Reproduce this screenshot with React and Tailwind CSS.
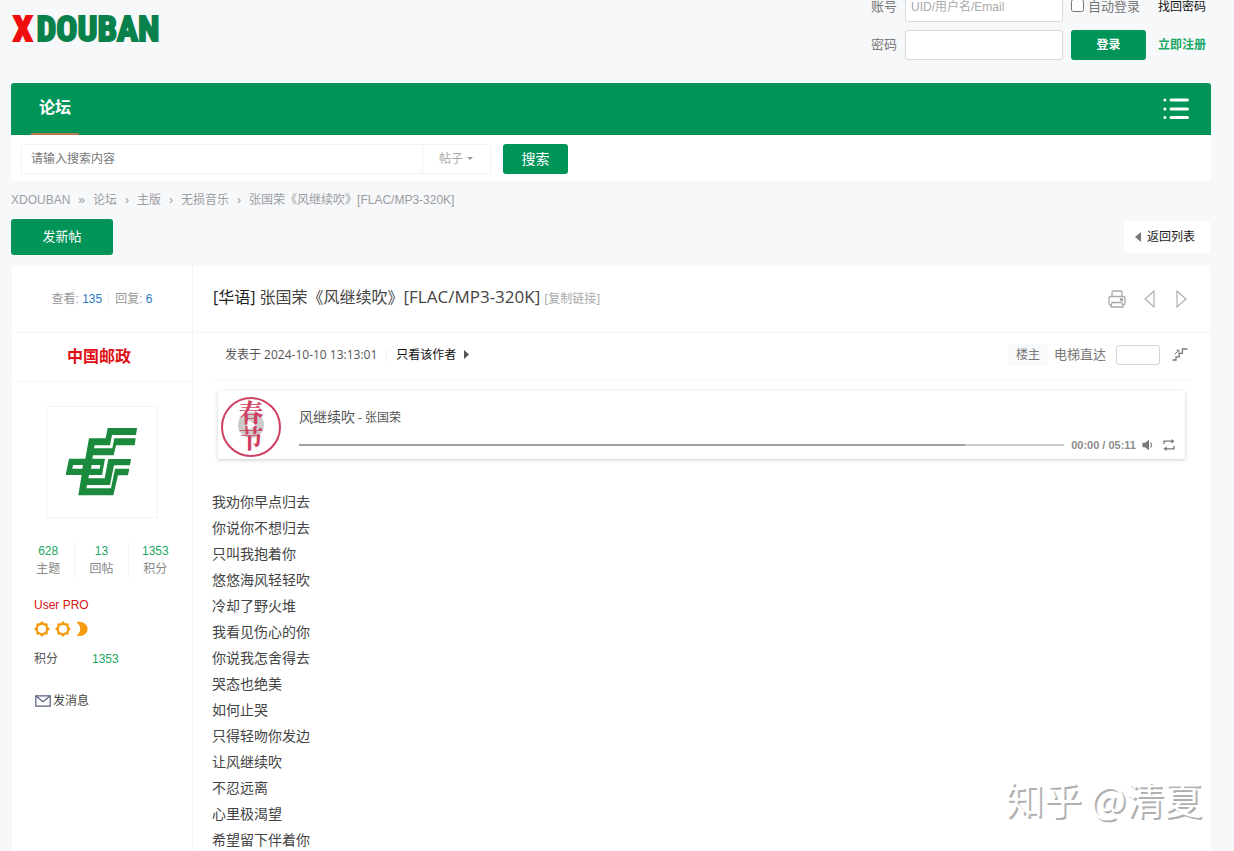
import React from "react";

const lyrics = [
  "我劝你早点归去",
  "你说你不想归去",
  "只叫我抱着你",
  "悠悠海风轻轻吹",
  "冷却了野火堆",
  "我看见伤心的你",
  "你说我怎舍得去",
  "哭态也绝美",
  "如何止哭",
  "只得轻吻你发边",
  "让风继续吹",
  "不忍远离",
  "心里极渴望",
  "希望留下伴着你",
];

const stats = [
  { value: "628", label: "主题" },
  { value: "13", label: "回帖" },
  { value: "1353", label: "积分" },
];

function SunIcon() {
  return (
    <svg viewBox="0 0 16 16" className="h-4 w-4" fill="#f59a0f" aria-hidden="true">
      <path
        fillRule="evenodd"
        d="M8 0 10.2 2.3 13.6 2.4 13.7 5.8 16 8 13.7 10.2 13.6 13.6 10.2 13.7 8 16 5.8 13.7 2.4 13.6 2.3 10.2 0 8 2.3 5.8 2.4 2.4 5.8 2.3ZM8 3.9a4.1 4.1 0 1 0 0 8.2a4.1 4.1 0 0 0 0-8.2Z"
      />
    </svg>
  );
}

function MoonIcon() {
  return (
    <svg viewBox="0 0 12 16" className="h-4 w-3" fill="#f59a0f" aria-hidden="true">
      <path d="M0.5 1.2C6 -0.2 11.6 3 11.6 8S6 16.2 0.5 14.6C3.4 12.4 4.2 10.4 4.2 8S3.4 3.4 0.5 1.2Z" />
    </svg>
  );
}

function PostLogo() {
  return (
    <svg viewBox="141 441 330 330" className="h-[110px] w-[110px]" fill="#1b8a3c" aria-hidden="true">
      <path d="M323 504H411L408 525H336L330 556H284L282 565H337L343 535H407L404 556H348L341 586H279L277 596H315L306 645H267L265 655H314L325 597H393L390 616H342L330 675H261L259 685H333L345 626H388L384 646H354L340 706H235L245 645H197L207 596H256L267 535H317Z" />
      <path d="M219 615H249L247 626H217ZM275 615H301L299 626H273Z" fill="#fff" />
    </svg>
  );
}

function Header() {
  return (
    <header className="-mt-2 flex items-start justify-between pr-[5px]">
      <h1 className="mt-3 ml-0.5 font-['Liberation_Sans_Narrow','Roboto_Condensed','DejaVu_Sans_Condensed',sans-serif] text-[35px] leading-[52px] font-bold text-[#09814b] [-webkit-text-stroke:2px_currentColor]">
        <a href="#home" className="flex gap-1">
          <span className="text-[#f00d0d]">X</span>
          <span>DOUBAN</span>
        </a>
      </h1>
      <form className="flex gap-x-2 text-[13px] text-[#777]" onSubmit={(e) => e.preventDefault()}>
        <div className="grid grid-cols-[auto_158px] items-center gap-2">
          <label htmlFor="account">账号</label>
          <input
            id="account"
            type="text"
            placeholder="UID/用户名/Email"
            className="h-[30px] w-full rounded-[3px] border border-[#d5dadf] bg-white px-[5px] text-xs placeholder:text-[#aaa]"
          />
          <label htmlFor="password">密码</label>
          <input
            id="password"
            type="password"
            className="h-[30px] w-full rounded-[3px] border border-[#d5dadf] bg-white px-[5px]"
          />
        </div>
        <div className="grid grid-cols-[75px_auto] items-center gap-x-3 gap-y-2">
          <label className="flex h-[30px] items-center gap-1 whitespace-nowrap">
            <input type="checkbox" className="-mt-1 h-[13px] w-[13px]" />
            自动登录
          </label>
          <a href="#recover" className="text-xs text-[#111]">
            找回密码
          </a>
          <button type="submit" className="h-[30px] rounded-[3px] bg-[#009458] text-xs font-bold text-white">
            登录
          </button>
          <a href="#register" className="text-xs font-bold text-[#1aa866]">
            立即注册
          </a>
        </div>
      </form>
    </header>
  );
}

function NavBar() {
  return (
    <nav className="mt-[23px] flex h-[52px] items-center justify-between rounded-t-[3px] bg-[#009458] px-5">
      <a
        href="#forum"
        className="flex h-full items-center border-b-2 border-[#b5784a] px-2 text-base font-bold text-white"
      >
        论坛
      </a>
      <button type="button" aria-label="快捷导航" className="text-white">
        <svg viewBox="0 0 28 24" className="h-6 w-7" fill="none" stroke="currentColor" strokeLinecap="round" strokeWidth="3">
          <path d="M8 3H24.5M8 12H24.5M8 20.5H24.5" />
          <path d="M1.8 3h.1M1.8 12h.1M1.8 20.5h.1" strokeWidth="3" />
        </svg>
      </button>
    </nav>
  );
}

function SearchBar() {
  return (
    <form
      className="flex h-[46px] items-center rounded-b-[3px] bg-white px-2.5 pt-0.5"
      onSubmit={(e) => e.preventDefault()}
    >
      <div className="flex h-[30px] rounded-[2px] border border-[#f2f3f4] text-xs">
        <input
          type="search"
          aria-label="搜索"
          placeholder="请输入搜索内容"
          className="w-[400px] px-[9px] placeholder:text-[#777]"
        />
        <div className="relative w-[68px] border-l border-[#f2f3f4]">
          <select
            aria-label="搜索范围"
            className="h-full w-full appearance-none bg-transparent pl-4 text-[#aaa]"
            defaultValue="thread"
          >
            <option value="thread">帖子</option>
            <option value="user">用户</option>
          </select>
          <svg
            viewBox="0 0 6 3"
            className="pointer-events-none absolute top-[12px] right-[17px] h-[3px] w-[6px]"
            fill="#999"
            aria-hidden="true"
          >
            <path d="M0 0H6L3 3Z" />
          </svg>
        </div>
      </div>
      <button type="submit" className="ml-3 h-[30px] w-[65px] rounded-[3px] bg-[#009458] text-sm text-white">
        搜索
      </button>
    </form>
  );
}

function Breadcrumb() {
  return (
    <nav aria-label="面包屑" className="mt-2.5 flex items-center gap-2 text-xs leading-[18px] text-[#9a9da1]">
      <a href="#home">XDOUBAN</a>
      <span>»</span>
      <a href="#forum">论坛</a>
      <span>›</span>
      <a href="#main">主版</a>
      <span>›</span>
      <a href="#lossless">无损音乐</a>
      <span>›</span>
      <a href="#thread">张国荣《风继续吹》[FLAC/MP3-320K]</a>
    </nav>
  );
}

function Player() {
  return (
    <section aria-label="音乐播放器" className="mx-1.5 mt-2.5 flex h-[68px] items-center bg-white pt-1 pr-2.5 pl-[3px] shadow-[0_1px_4px_rgba(0,0,0,0.2)]">
      <button
        type="button"
        aria-label="播放"
        className="relative flex h-[60px] w-[60px] shrink-0 flex-col items-center justify-center rounded-full border-2 border-[#cf3f62] font-['Liberation_Serif','Noto_Serif_CJK_SC','Noto_Sans_CJK_SC',serif] text-[25px] leading-[26px] font-bold text-[#cf3f62]"
      >
        <span aria-hidden="true" className="absolute top-[13px] left-[15px] h-[26px] w-[26px] rounded-full bg-[#ccc]" />
        <span className="relative">春</span>
        <span className="relative">节</span>
        <svg viewBox="0 0 10 10" className="absolute top-[21px] left-[23px] h-[10px] w-[10px]" fill="#fff" aria-hidden="true">
          <path d="M1.5 1C4 0 9 3.6 9 5S4 10 1.5 9Z" />
        </svg>
      </button>
      <div className="mt-[7px] ml-[18px] flex-1">
        <p className="font-['Open_Sans','Noto_Sans_CJK_SC',sans-serif] text-sm leading-5 text-[#555]">
          风继续吹<span className="text-xs"> - 张国荣</span>
        </p>
        <div className="mt-2 flex items-center text-[11px] leading-5 font-bold text-[#8c8c8c]">
          <input
            type="range"
            min="0"
            max="311"
            defaultValue="0"
            aria-label="播放进度"
            className="h-[2px] flex-1 appearance-none bg-[linear-gradient(to_right,#a0a0a0_87%,#cbcbcb_87%)] [&::-webkit-slider-thumb]:h-0 [&::-webkit-slider-thumb]:w-0 [&::-webkit-slider-thumb]:appearance-none"
          />
          <span className="ml-[7px]">00:00 / 05:11</span>
          <button type="button" aria-label="音量" className="ml-1.5">
            <svg viewBox="0 0 12 12" className="h-3 w-3" fill="#777">
              <path d="M0.5 3.8H3L7 0.8V11.2L3 8.2H0.5Z" />
              <path d="M8.3 3.6C10 4.8 10 7.2 8.3 8.4" fill="none" stroke="#888" strokeWidth="1.2" />
            </svg>
          </button>
          <button type="button" aria-label="循环" className="ml-[9px]">
            <svg viewBox="0 0 12 12" className="h-3 w-3" fill="none" stroke="#777" strokeWidth="1.3">
              <path d="M1 5V2.2H9M11 7V9.8H3" />
              <path d="M8.3 0 11.6 2.2 8.3 4.4ZM3.7 7.6 0.4 9.8 3.7 12Z" fill="#777" stroke="none" />
            </svg>
          </button>
        </div>
      </div>
    </section>
  );
}

function AuthorPanel() {
  return (
    <aside className="w-[181px] shrink-0 border-r border-[#f3f4f6] text-xs">
      <div className="flex h-[67px] items-center justify-center border-b border-[#f3f4f6] text-[#999]">
        <span>
          查看: <span className="text-[#2b7bc0]">135</span>
        </span>
        <span className="mx-1.5 h-3 w-px bg-[#f0f0f0]" />
        <span>
          回复: <span className="text-[#2b7bc0]">6</span>
        </span>
      </div>
      <div className="flex h-[49px] items-center justify-center border-b border-[#f6f6f7] pr-1.5 text-base font-bold">
        <a href="#author" className="text-[#e00f14]">
          中国邮政
        </a>
      </div>
      <a href="#author" aria-label="中国邮政" className="mx-auto mt-6 block w-28 border border-[#f5f5f5]">
        <PostLogo />
      </a>
      <dl className="mx-2.5 mt-6 grid grid-cols-3 text-center leading-[18px]">
        {stats.map((s) => (
          <div
            key={s.label}
            className="flex flex-col-reverse border-r border-[#f3f3f3] last:border-r-0"
          >
            <dt className="text-[#888]">{s.label}</dt>
            <dd className="text-[#22a562]">{s.value}</dd>
          </div>
        ))}
      </dl>
      <div className="pl-[22px]">
        <p className="mt-[18px] leading-[18px] text-[#d81515]">User PRO</p>
        <div className="mt-[7px] flex gap-[5px]">
          <SunIcon />
          <SunIcon />
          <MoonIcon />
        </div>
        <p className="mt-[13px] flex leading-[18px] text-[#555]">
          <span className="w-[58px]">积分</span>
          <span className="text-[#22a562]">1353</span>
        </p>
        <a href="#message" className="mt-6 flex items-center gap-0.5 pl-px leading-[18px] text-[#444]">
          <svg viewBox="0 0 16 12" className="h-3 w-4" fill="none" stroke="#55607a" strokeWidth="1.2" aria-hidden="true">
            <path d="M0.8 0.8H15.2V11.2H0.8Z" />
            <path d="M1 1 8 6.8 15 1" />
          </svg>
          发消息
        </a>
      </div>
    </aside>
  );
}

function Thread() {
  return (
    <main className="mx-px mt-[11px] flex min-h-0 flex-1 bg-white">
      <AuthorPanel />
      <article className="min-w-0 flex-1">
        <div className="flex h-[67px] items-center justify-between border-b border-[#f3f4f6] pr-[22px] pl-5">
          <h2 className="-mt-1 flex items-baseline font-['Open_Sans','Noto_Sans_CJK_SC',sans-serif] text-base text-[#444]">
            <a href="#category" className="mr-1 text-[#222]">
              [华语]
            </a>
            张国荣《风继续吹》<span className="text-[17px]">[FLAC/MP3-320K]</span>
            <a href="#copy" className="ml-1 text-xs text-[#aaa]">
              [复制链接]
            </a>
          </h2>
          <div className="flex items-center gap-[17px] text-[#aaa]">
            <a href="#print" aria-label="打印">
              <svg viewBox="0 0 18 18" className="h-[18px] w-[18px]" fill="none" stroke="currentColor" strokeWidth="1.3">
                <path d="M4 6.5V2.5Q4 1 5.5 1H12.5Q14 1 14 2.5V6.5" />
                <path d="M4 15H3Q1 15 1 13V8.5Q1 6.5 3 6.5H15Q17 6.5 17 8.5V13Q17 15 15 15H14" />
                <path d="M4 12.5H14L15 17H3Z" />
                <path d="M12.5 9h2v1.3h-2Z" />
              </svg>
            </a>
            <a href="#prev" aria-label="上一主题">
              <svg viewBox="0 0 14 18" className="h-[18px] w-3.5" fill="none" stroke="currentColor" strokeWidth="1.1">
                <path d="M11 1V17L2 9Z" />
              </svg>
            </a>
            <a href="#next" aria-label="下一主题">
              <svg viewBox="0 0 14 18" className="h-[18px] w-3.5" fill="none" stroke="currentColor" strokeWidth="1.1">
                <path d="M3 1V17L12 9Z" />
              </svg>
            </a>
          </div>
        </div>
        <div className="px-[19px]">
          <div className="flex h-12 items-center justify-between border-b border-[#f6f6f7] pr-[3px] pb-1 pl-[13px] font-['Open_Sans','Noto_Sans_CJK_SC',sans-serif] text-xs text-[#555]">
            <div className="flex items-center">
              <span>发表于 2024-10-10 13:13:01</span>
              <span className="mx-[9px] h-3 w-px bg-[#eee]" />
              <a href="#author-only" className="flex items-center gap-2 text-[#111]">
                只看该作者
                <svg viewBox="0 0 5 9" className="h-[9px] w-[5px]" fill="#555" aria-hidden="true">
                  <path d="M0 0 5 4.5 0 9Z" />
                </svg>
              </a>
            </div>
            <form className="flex items-center text-[#777]" onSubmit={(e) => e.preventDefault()}>
              <span className="bg-[#f7f9fa] px-2 leading-[22px]">楼主</span>
              <label htmlFor="floor" className="mx-1.5 text-[13px]">
                电梯直达
              </label>
              <input id="floor" type="text" className="ml-1 h-5 w-11 rounded-[3px] border border-[#d5d5d5] px-1" />
              <button type="submit" aria-label="跳转到指定楼层" className="ml-3">
                <svg viewBox="0 0 16 13" className="h-[13px] w-4" fill="none" stroke="#777" strokeWidth="1.3">
                  <path d="M0.5 12H4V8.8H7.2V5.4H10.4V1H15.5" />
                  <path d="M2.8 6.2 7 2.2M4.4 2.2H7V4.8" strokeWidth="1" />
                </svg>
              </button>
            </form>
          </div>
          <Player />
          <div className="mt-[30px] text-sm leading-[26px] text-[#444]">
            {lyrics.map((line) => (
              <p key={line}>{line}</p>
            ))}
          </div>
        </div>
      </article>
    </main>
  );
}

export default function App() {
  return (
    <div className="relative h-screen overflow-hidden bg-[#f7f8fa] font-['Liberation_Sans','Noto_Sans_CJK_SC',sans-serif]">
      <div className="flex h-full flex-col overflow-y-auto pr-[23px] pl-[11px] [scrollbar-width:none]">
        <Header />
        <NavBar />
        <SearchBar />
        <Breadcrumb />
        <div className="mt-2.5 flex items-center justify-between">
          <button type="button" className="h-9 w-[102px] rounded-[3px] bg-[#009458] text-[13px] text-white">
            发新帖
          </button>
          <a href="#list" className="mr-px flex h-8 items-center gap-1.5 rounded-[2px] bg-white px-[11px] pr-[15px] text-xs text-[#222]">
            <svg viewBox="0 0 6 10" className="h-2.5 w-1.5" fill="#777" aria-hidden="true">
              <path d="M6 0V10L0 5Z" />
            </svg>
            返回列表
          </a>
        </div>
        <Thread />
      </div>
      <p className="pointer-events-none absolute right-8 bottom-7 font-['Noto_Sans_CJK_SC',sans-serif] text-[38px] leading-[50px] text-white [text-shadow:2px_2px_0_#b0b0b0]">
        知乎 @清夏
      </p>
    </div>
  );
}
